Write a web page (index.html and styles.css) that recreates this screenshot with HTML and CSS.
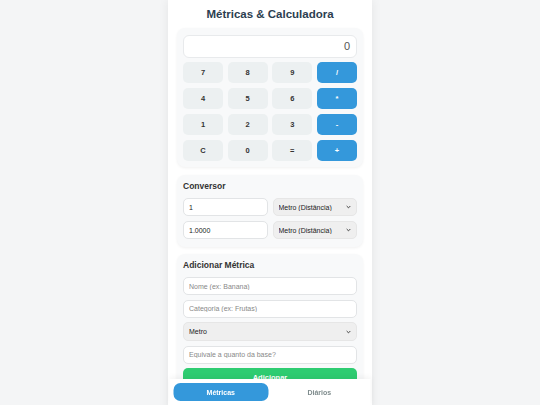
FILE: index.html
```html
<!DOCTYPE html>
<html lang="pt">
<head>
<meta charset="utf-8">
<title>Métricas &amp; Calculadora</title>
<link rel="stylesheet" href="styles.css">
</head>
<body>
<div class="app">
  <h1 class="title">Métricas &amp; Calculadora</h1>

  <section class="card calc">
    <div class="display">0</div>
    <div class="keys">
      <button class="key">7</button>
      <button class="key">8</button>
      <button class="key">9</button>
      <button class="key op">/</button>
      <button class="key">4</button>
      <button class="key">5</button>
      <button class="key">6</button>
      <button class="key op">*</button>
      <button class="key">1</button>
      <button class="key">2</button>
      <button class="key">3</button>
      <button class="key op">-</button>
      <button class="key">C</button>
      <button class="key">0</button>
      <button class="key">=</button>
      <button class="key op">+</button>
    </div>
  </section>

  <section class="card">
    <h2 class="card-title">Conversor</h2>
    <div class="conv-row">
      <input class="field" type="text" value="1">
      <select class="field sel"><option>Metro (Distância)</option></select>
    </div>
    <div class="conv-row">
      <input class="field" type="text" value="1.0000">
      <select class="field sel"><option>Metro (Distância)</option></select>
    </div>
  </section>

  <section class="card">
    <h2 class="card-title">Adicionar Métrica</h2>
    <div class="stack">
      <input class="field" type="text" placeholder="Nome (ex: Banana)">
      <input class="field" type="text" placeholder="Categoria (ex: Frutas)">
      <select class="field sel tall"><option>Metro</option></select>
      <input class="field" type="text" placeholder="Equivale a quanto da base?">
      <button class="add">Adicionar</button>
    </div>
  </section>
</div>

<nav class="tabs">
  <button class="tab active">Métricas</button>
  <button class="tab">Diários</button>
</nav>
</body>
</html>
```

FILE: styles.css
```css
* { box-sizing: border-box; }

html, body {
  margin: 0;
  padding: 0;
  background: #f4f5f6;
  font-family: "Liberation Sans", Arial, sans-serif;
}

.app {
  width: 204px;
  margin: 0 auto;
  min-height: 405px;
  background: #ffffff;
  box-shadow: 0 0 10px rgba(0, 0, 0, 0.07);
  padding: 7px 9px 40px;
}

.title {
  margin: 0 0 7px;
  font-size: 11.5px;
  line-height: 14px;
  font-weight: bold;
  text-align: center;
  color: #2c3e50;
}

.card {
  background: #f8f9fa;
  border-radius: 8px;
  box-shadow: 0 1px 3px rgba(0, 0, 0, 0.06);
  padding: 6px 6px 8px;
  margin-bottom: 7px;
}

.calc {
  padding: 7px 6px 6px;
  margin-bottom: 8px;
}

.display {
  height: 23px;
  background: #ffffff;
  border: 1px solid #e8eaec;
  border-radius: 6px;
  text-align: right;
  padding: 0 6px;
  font-size: 11px;
  line-height: 21px;
  color: #555;
  margin-bottom: 4px;
}

.keys {
  display: grid;
  grid-template-columns: repeat(4, 1fr);
  column-gap: 4.5px;
  row-gap: 5px;
}

.key {
  height: 21px;
  border: none;
  border-radius: 5px;
  background: #ecf0f1;
  color: #333;
  font-family: inherit;
  font-size: 7.5px;
  font-weight: bold;
  padding: 0;
}

.key.op {
  background: #3498db;
  color: #ffffff;
}

.card-title {
  margin: 0 0 6px;
  font-size: 8.5px;
  line-height: 11px;
  font-weight: bold;
  color: #333;
}

.conv-row {
  display: grid;
  grid-template-columns: 1fr 1fr;
  column-gap: 5px;
  margin-bottom: 5px;
}

.conv-row:last-child { margin-bottom: 0; }

.field {
  height: 18px;
  width: 100%;
  border: 1px solid #e2e4e6;
  border-radius: 5px;
  background-color: #ffffff;
  font-family: inherit;
  font-size: 7px;
  color: #222;
  padding: 0 5px;
  outline: none;
}

.field::placeholder { color: #888; }

.sel {
  -webkit-appearance: none;
  appearance: none;
  background-color: #efefef;
  border-color: #e6e6e6;
  padding: 0 12px 0 5px;
  background-image: url("data:image/svg+xml;utf8,<svg xmlns='http://www.w3.org/2000/svg' width='6' height='4' viewBox='0 0 6 4'><path d='M0.8 0.8 L3 3 L5.2 0.8' fill='none' stroke='%23333' stroke-width='1.1'/></svg>");
  background-repeat: no-repeat;
  background-position: right 5px center;
  background-size: 5px 4px;
}

.tall { height: 19px; }

.stack {
  display: flex;
  flex-direction: column;
  gap: 4.5px;
}

.add {
  height: 18px;
  flex-shrink: 0;
  border: none;
  border-radius: 5px;
  background: #2ecc71;
  color: #ffffff;
  font-family: inherit;
  font-size: 7.5px;
  font-weight: bold;
  padding: 0;
}

.tabs {
  position: fixed;
  bottom: 0;
  left: 50%;
  transform: translateX(-50%);
  width: 201px;
  height: 26px;
  background: #ffffff;
  box-shadow: 0 -2px 6px rgba(0, 0, 0, 0.05);
  display: flex;
  gap: 4px;
  padding: 4px;
}

.tab {
  flex: 1;
  border: none;
  border-radius: 7px;
  background: transparent;
  color: #7f8c8d;
  font-family: inherit;
  font-size: 7px;
  font-weight: bold;
  padding: 0;
}

.tab.active {
  background: #3498db;
  color: #ffffff;
}
```
